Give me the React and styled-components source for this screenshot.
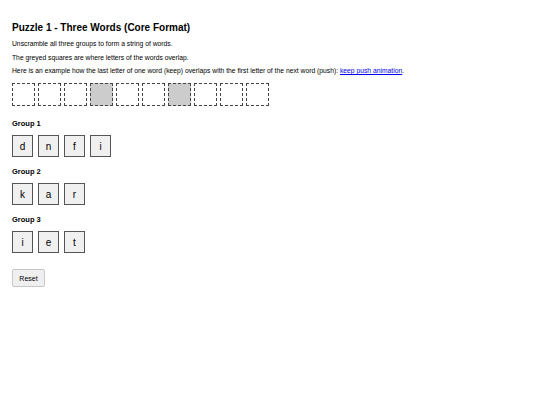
import React from 'react'
import styled, { createGlobalStyle } from 'styled-components'

const GlobalStyle = createGlobalStyle`
  html, body {
    margin: 0;
    padding: 0;
    background: #fff;
  }
  body {
    font-family: "Liberation Sans", Arial, sans-serif;
    color: #000;
  }
`

const example = [false, false, false, true, false, false, true, false, false, false]

const groups = [
  { name: 'Group 1', letters: ['d', 'n', 'f', 'i'] },
  { name: 'Group 2', letters: ['k', 'a', 'r'] },
  { name: 'Group 3', letters: ['i', 'e', 't'] },
]

const App = () => {
  return (
    <Page>
      <GlobalStyle />
      <Title>Puzzle 1 - Three Words (Core Format)</Title>
      <Text>Unscramble all three groups to form a string of words.</Text>
      <Text>The greyed squares are where letters of the words overlap.</Text>
      <Text>
        Here is an example how the last letter of one word (keep) overlaps with the first letter of the next word (push):{' '}
        <Link href="#">keep push animation</Link>.
      </Text>
      <SlotRow>
        {example.map((grey, i) => (
          <Slot key={i} $grey={grey} />
        ))}
      </SlotRow>
      {groups.map((g) => (
        <Group key={g.name}>
          <GroupTitle>{g.name}</GroupTitle>
          <TileRow>
            {g.letters.map((l, i) => (
              <Tile key={i}>{l}</Tile>
            ))}
          </TileRow>
        </Group>
      ))}
      <ResetButton>Reset</ResetButton>
    </Page>
  )
}

export default App

const Page = styled.div`
  padding: 22px 12px;
`

const Title = styled.h1`
  margin: 0 0 6px;
  font-size: 10px;
  line-height: 12px;
  font-weight: bold;
`

const Text = styled.p`
  margin: 0 0 5.5px;
  font-size: 6.75px;
  line-height: 8px;
`

const Link = styled.a`
  color: #0000ee;
  text-decoration: underline;
`

const SlotRow = styled.div`
  display: flex;
  gap: 3px;
  margin-top: 8px;
  margin-bottom: 13px;
`

const Slot = styled.div`
  width: 23px;
  height: 23px;
  box-sizing: border-box;
  border: 1px dashed #444;
  background: ${(p) => (p.$grey ? '#cccccc' : '#fff')};
`

const Group = styled.div`
  margin-bottom: 10px;
`

const GroupTitle = styled.h3`
  margin: 0 0 7px;
  font-size: 7.5px;
  line-height: 9px;
  font-weight: bold;
`

const TileRow = styled.div`
  display: flex;
  gap: 5px;
`

const Tile = styled.div`
  width: 21px;
  height: 22px;
  box-sizing: border-box;
  border: 1px solid #555;
  background: #f0f0f0;
  display: flex;
  align-items: center;
  justify-content: center;
  font-size: 10px;
`

const ResetButton = styled.button`
  margin-top: 6px;
  width: 33px;
  height: 18px;
  padding: 0;
  font-family: "Liberation Sans", Arial, sans-serif;
  font-size: 7px;
  color: #000;
  background: #efefef;
  border: 1px solid #c8c8c8;
  border-radius: 2px;
`
